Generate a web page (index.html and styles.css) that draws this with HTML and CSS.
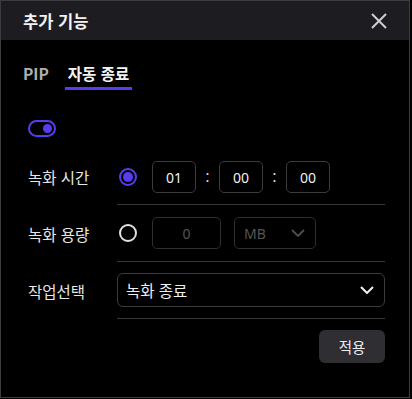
FILE: index.html
```html
<!DOCTYPE html>
<html lang="ko">
<head>
<meta charset="utf-8">
<link rel="stylesheet" href="styles.css">
</head>
<body>
<div class="dialog">
  <div class="header">
    <span class="title">추가 기능</span>
    <svg class="close" width="18" height="18" viewBox="0 0 18 18"><path d="M2 2L16 16M16 2L2 16" stroke="#cfcfcf" stroke-width="2" fill="none"/></svg>
  </div>
  <div class="tabs">
    <div class="tab">PIP</div>
    <div class="tab active">자동 종료</div>
  </div>
  <div class="content">
    <div class="toggle"><span class="knob"></span></div>
    <div class="row row1">
      <div class="label">녹화 시간</div>
      <div class="field">
        <span class="radio checked"></span>
        <span class="box num">01</span>
        <span class="colon">:</span>
        <span class="box num">00</span>
        <span class="colon">:</span>
        <span class="box num">00</span>
      </div>
    </div>
    <div class="row">
      <div class="label">녹화 용량</div>
      <div class="field">
        <span class="radio"></span>
        <span class="box wide disabled">0</span>
        <span class="box sel disabled">MB<svg width="14" height="8" viewBox="0 0 14 8"><path d="M1 1L7 7L13 1" stroke="#4e4e4e" stroke-width="1.8" fill="none"/></svg></span>
      </div>
    </div>
    <div class="row row3">
      <div class="label">작업선택</div>
      <div class="field">
        <div class="select">녹화 종료<svg width="14" height="8" viewBox="0 0 14 8"><path d="M1 1L7 7L13 1" stroke="#f0f0f0" stroke-width="2" fill="none"/></svg></div>
      </div>
    </div>
    <div class="actions"><button class="apply">적용</button></div>
  </div>
</div>
</body>
</html>
```
FILE: styles.css
```css
html, body { margin: 0; padding: 0; background: #000; }
body { font-family: "Noto Sans CJK KR", "Noto Sans", sans-serif; color: #e8e8e8; }
.dialog {
  width: 410px; height: 398px; box-sizing: border-box;
  border: 1px solid #3d3d40; background: #000;
}
.header {
  height: 39px; background: #1d1d21;
  display: flex; align-items: center; justify-content: space-between;
  padding: 0 21px 0 22px;
}
.title { font-size: 16.5px; font-weight: 700; color: #f2f2f2; }
.tabs { display: flex; gap: 13px; padding-left: 19px; margin-top: 23px; }
.tab {
  font-size: 15.5px; font-weight: 700; color: #b0b0b0; line-height: 20px;
  padding: 0 3px 4px; border-bottom: 3px solid transparent;
}
.tab.active { color: #f4f4f4; border-bottom-color: #5a3cf0; }
.content { padding: 0 24px 0 27px; }
.toggle {
  margin-top: 30px; width: 24px; height: 13px; border: 2px solid #5a3cf0;
  border-radius: 10px; position: relative;
}
.knob {
  position: absolute; right: 2px; top: 2px; width: 9px; height: 9px;
  border-radius: 50%; background: #5a3cf0;
}
.row { display: flex; align-items: center; }
.row1 { margin-top: 12px; }
.label { width: 89px; font-size: 15.5px; color: #e6e6e6; }
.field {
  flex: 1; display: flex; align-items: center;
  padding: 12px 0; border-bottom: 1px solid #38383c;
}
.row1 .field { padding-top: 12px; padding-bottom: 11px; }
.row3 .field { padding: 11px 0; }
.radio {
  width: 14px; height: 14px; border: 2px solid #e0e0e0; border-radius: 50%;
  margin: 0 15px 0 2px; position: relative; flex: none;
}
.radio.checked { border-color: #5a3cf0; }
.radio.checked::after {
  content: ""; position: absolute; left: 2px; top: 2px; width: 10px; height: 10px;
  border-radius: 50%; background: #5a3cf0;
}
.box {
  box-sizing: border-box; height: 32px; border: 1px solid #3c3c3f; border-radius: 5px;
  display: flex; align-items: center; justify-content: center;
  font-family: "Noto Sans", sans-serif; font-size: 14px; color: #f0f0f0;
}
.num { width: 44px; }
.colon { width: 23px; text-align: center; font-size: 14px; color: #e0e0e0; }
.wide { width: 69px; margin-right: 13px; }
.disabled { color: #555; border-color: #2e2e31; }
.sel { width: 82px; justify-content: space-between; padding: 0 10px 0 9px; }
.select {
  box-sizing: border-box; flex: 1; height: 34px; border: 1px solid #3c3c3f; border-radius: 6px;
  display: flex; align-items: center; justify-content: space-between;
  padding: 0 10px 0 8px; font-size: 15.5px; color: #f0f0f0;
}
.actions { display: flex; justify-content: flex-end; padding-top: 11px; }
.apply {
  width: 66px; height: 33px; border: none; border-radius: 6px; background: #2e2e33;
  color: #ececec; font-family: "Noto Sans CJK KR", sans-serif; font-size: 14.5px;
}
```
